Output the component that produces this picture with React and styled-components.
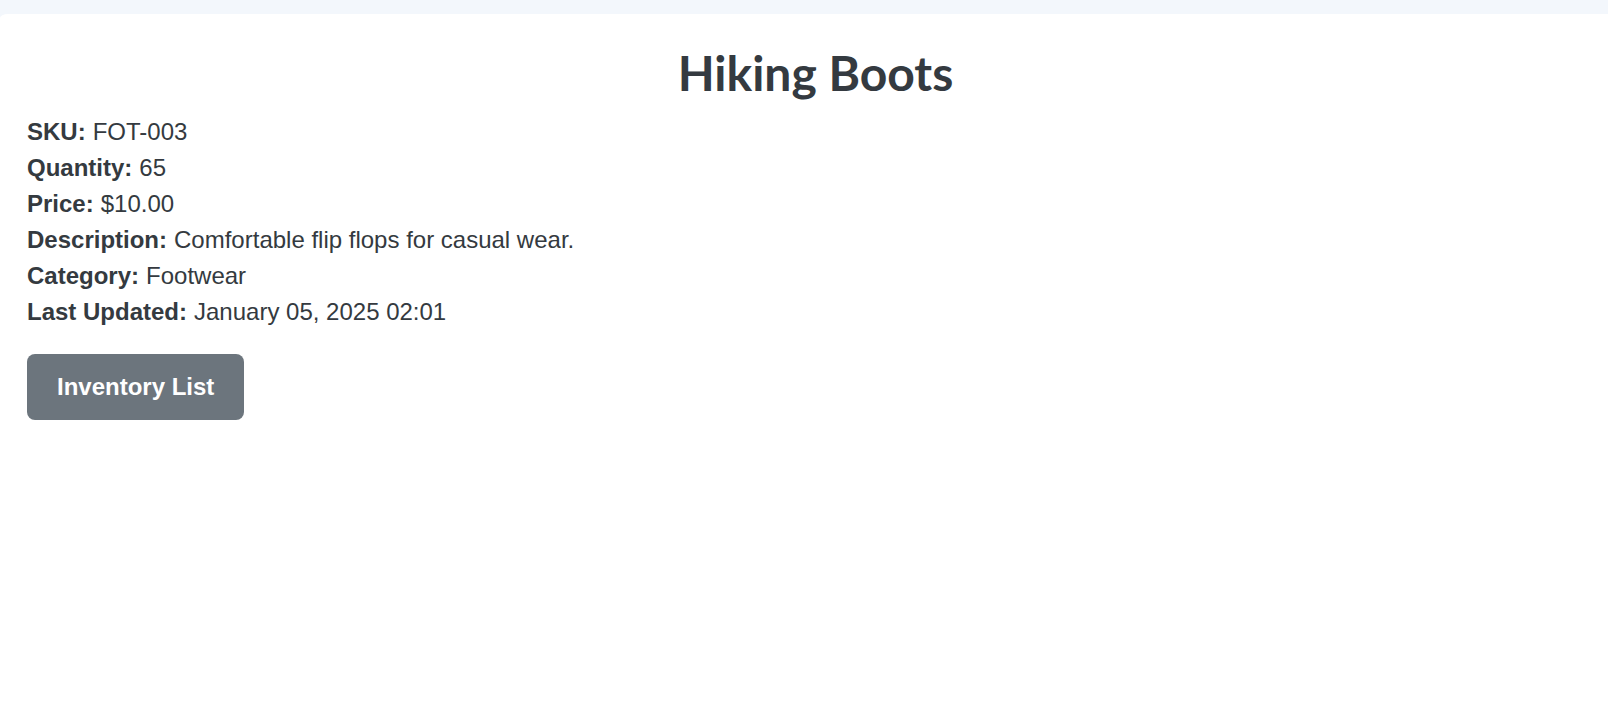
import React from "react";
import styled, { createGlobalStyle } from "styled-components";

const GlobalStyle = createGlobalStyle`
  *, *::before, *::after { box-sizing: border-box; }
  body {
    margin: 0;
    background: #f3f7fc;
    color: #343a40;
    font-family: "Liberation Sans", Arial, sans-serif;
    font-size: 24px;
    line-height: 36px;
  }
`;

const Page = styled.div`
  display: flex;
  flex-direction: column;
  min-height: 100vh;
  padding-top: 14px;
`;

const Card = styled.main`
  flex: 1;
  padding: 29px 4px 30px 27px;
  background: #fff;
  border-top-left-radius: 8px 4px;
`;

const Title = styled.h1`
  margin: 0 0 11px;
  font-family: Lato, sans-serif;
  font-size: 48px;
  font-weight: 700;
  line-height: 60px;
  text-align: center;
`;

const Details = styled.dl`
  margin: 0 0 24px;
`;

const Detail = styled.div`
  display: flex;
  gap: 7px;
`;

const Label = styled.dt`
  font-weight: 700;
`;

const Value = styled.dd`
  margin: 0;
`;

const ButtonLink = styled.a`
  display: inline-block;
  padding: 15px 30px;
  border-radius: 8px;
  background: #6c757d;
  color: #fff;
  font-weight: 700;
  text-decoration: none;
`;

const details = [
  ["SKU", "FOT-003"],
  ["Quantity", "65"],
  ["Price", "$10.00"],
  ["Description", "Comfortable flip flops for casual wear."],
  ["Category", "Footwear"],
  ["Last Updated", "January 05, 2025 02:01"],
];

export default function App() {
  return (
    <Page>
      <GlobalStyle />
      <Card>
        <Title>Hiking Boots</Title>
        <Details>
          {details.map(([label, value]) => (
            <Detail key={label}>
              <Label>{label}:</Label>
              <Value>{value}</Value>
            </Detail>
          ))}
        </Details>
        <ButtonLink href="#inventory">Inventory List</ButtonLink>
      </Card>
    </Page>
  );
}
